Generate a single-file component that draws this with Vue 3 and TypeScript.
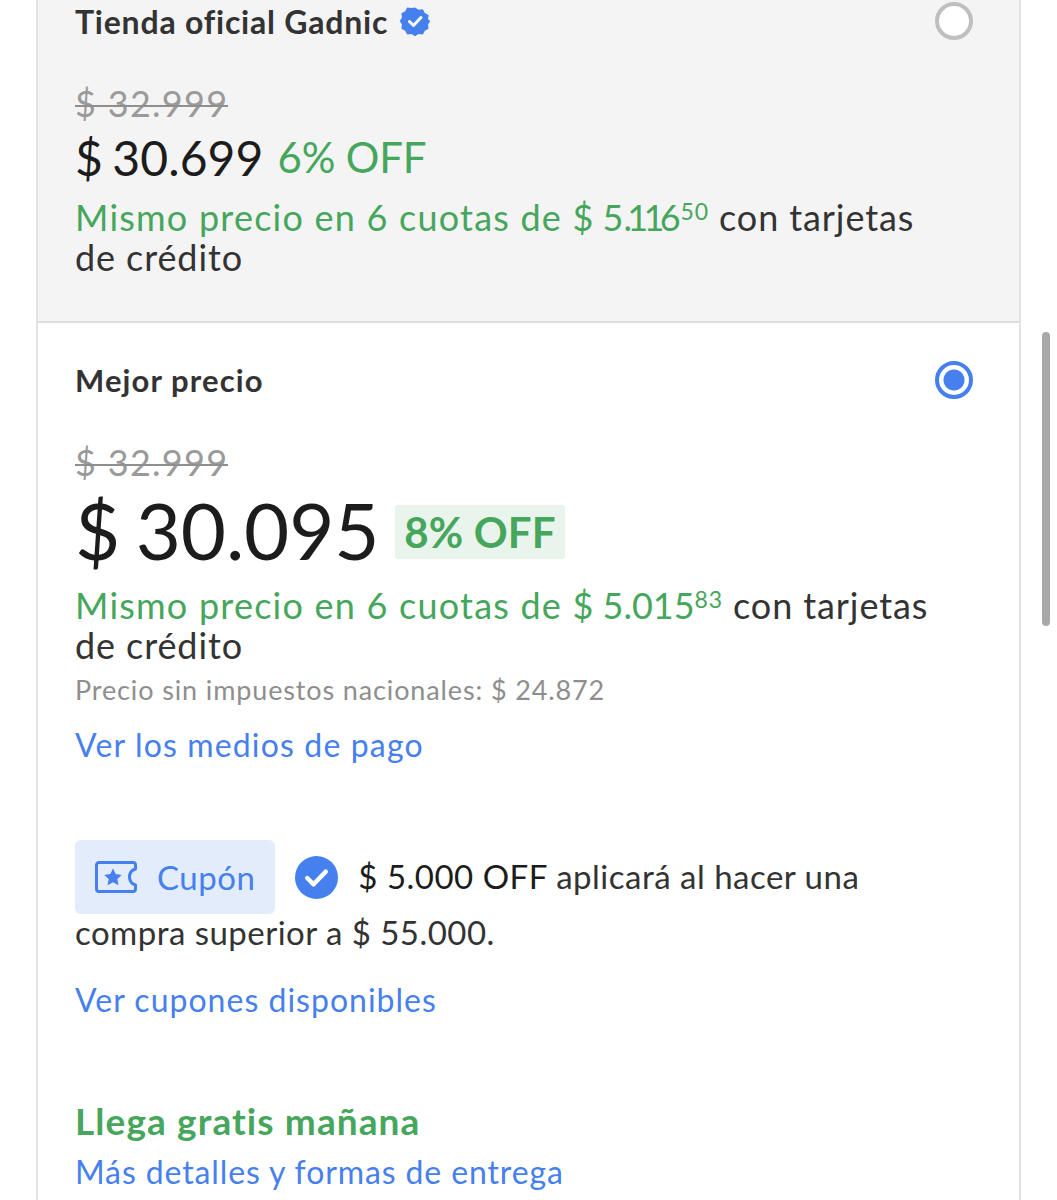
<template>
  <div class="page">
    <div class="frame">
      <section class="offer muted">
        <div class="head">
          <div class="title">
            Tienda oficial Gadnic
            <svg class="verified" viewBox="0 0 32 32" width="32" height="32">
              <path fill="#4680ee" d="M16 1l4 2.600 4.700-.6 2.200 4.200 4.200 2.200-.6 4.700L33 16l-2.500 4 .6 4.700-4.200 2.200-2.200 4.200-4.700-.6L16 33l-4-2.500-4.700.6-2.200-4.200-4.200-2.200.6-4.700L-1 16l2.500-3.900-.6-4.700 4.200-2.200 2.200-4.200 4.700.6z" transform="translate(1.600 1.600) scale(.9)"/>
              <path fill="none" stroke="#fff" stroke-width="3" stroke-linecap="round" stroke-linejoin="round" d="M10.500 16.500l4 4 7.500-8"/>
            </svg>
          </div>
          <span class="radio"></span>
        </div>
        <div class="old">$ 32.999</div>
        <div class="price-row small">
          <span class="price">$ 30.699</span>
          <span class="off">6% OFF</span>
        </div>
        <p class="installments first"><span class="green">Mismo precio en 6 cuotas de <span class="amt">$ 5<span class="ones">.11</span>6</span><sup>50</sup></span><span class="rest"> con tarjetas de crédito</span></p>
      </section>

      <section class="offer best-offer">
        <div class="head">
          <div class="title best">Mejor precio</div>
          <span class="radio on"></span>
        </div>
        <div class="old">$ 32.999</div>
        <div class="price-row big">
          <span class="price">$ 30.095</span>
          <span class="off tag">8% OFF</span>
        </div>
        <p class="installments second"><span class="green">Mismo precio en 6 cuotas de <span class="amt">$ 5.015</span><sup>83</sup></span><span class="rest"> con tarjetas de crédito</span></p>
        <div class="no-tax">Precio sin impuestos nacionales: $ 24.872</div>
        <a class="link pay">Ver los medios de pago</a>

        <div class="coupon">
          <span class="coupon-tag">
            <svg viewBox="0 0 44 34" width="44" height="34" fill="none">
              <path stroke="#4680ee" stroke-width="3" stroke-linejoin="round" d="M5 2.500h34a2.500 2.500 0 0 1 2.500 2.500v4c-3.500 1-6 4-6 8s2.500 7 6 8v4a2.500 2.500 0 0 1-2.500 2.500H5A2.500 2.500 0 0 1 2.500 29V5A2.500 2.500 0 0 1 5 2.500z"/>
              <path fill="#4680ee" d="M19 8.500l2.700 5.600 6.100.8-4.500 4.200 1.200 6.100-5.500-3-5.500 3 1.200-6.100-4.500-4.200 6.100-.8z"/>
            </svg>
            Cupón
          </span>
          <svg class="check" viewBox="0 0 44 44" width="43" height="43">
            <circle cx="22" cy="22" r="22" fill="#4680ee"/>
            <path fill="none" stroke="#fff" stroke-width="4.500" stroke-linecap="round" stroke-linejoin="round" d="M12.500 22.500l6.500 6.500 12.500-13"/>
          </svg>
          <span class="coupon-text"><span class="strong">$ 5.000 OFF</span> aplicará al hacer una</span>
        </div>
        <div class="coupon-more">compra superior a $ 55.000.</div>
        <a class="link coupons">Ver cupones disponibles</a>

        <div class="shipping">Llega gratis mañana</div>
        <a class="link details">Más detalles y formas de entrega</a>
      </section>
    </div>
    <div class="scrollbar"></div>
  </div>
</template>

<script setup lang="ts">
</script>

<style>
html, body {
  background: #fff;
  overflow: hidden;
}
</style>

<style scoped>
.page {
  position: relative;
  width: 1057px;
  height: 1200px;
  overflow: hidden;
  font-family: "Lato", "Open Sans", sans-serif;
  color: #333;
}

.frame {
  margin-left: 36px;
  width: 985px;
  height: 1200px;
  border-left: 2px solid #e3e3e3;
  border-right: 2px solid #e3e3e3;
  box-sizing: border-box;
}

.offer {
  padding: 0 46px 0 37px;
}

.muted {
  height: 323px;
  box-sizing: border-box;
  background: #f4f4f4;
  border-bottom: 2px solid #dedede;
}

.best-offer {
  padding-top: 35px;
}

.head {
  display: flex;
  justify-content: space-between;
  align-items: center;
  height: 44px;
}

.muted .head {
  height: 42px;
}

.title {
  display: flex;
  align-items: center;
  gap: 11px;
  font-size: 32px;
  font-weight: 700;
  letter-spacing: 0.78px;
}

.best {
  font-size: 31px;
  letter-spacing: 1.100px;
}

.verified {
  flex: none;
  width: 32px;
  height: 32px;
}

.radio {
  box-sizing: border-box;
  width: 38px;
  height: 38px;
  border-radius: 50%;
  background: #fff;
  border: 4px solid #bfbfbf;
}

.radio.on {
  border-color: #4680ee;
  background: radial-gradient(circle, #4680ee 0 10px, #fff 11px);
}

.old {
  position: relative;
  margin-top: 38px;
  width: fit-content;
  font-size: 36px;
  line-height: 44px;
  color: #9a9a9a;
  letter-spacing: 1.300px;
}

.muted .old {
  margin-top: 39px;
}

.old::after {
  content: "";
  position: absolute;
  left: 0;
  right: 0;
  top: 24px;
  height: 2px;
  background: #8f8f8f;
}

.price-row {
  display: flex;
  align-items: center;
  color: #1c1c1c;
}

.price-row.small {
  height: 64px;
  gap: 14px;
}

.price-row.small .price {
  font-size: 48px;
  letter-spacing: 0.100px;
  word-spacing: -3px;
}

.price-row.small .off {
  font-size: 42px;
  letter-spacing: -0.150px;
}

.price-row.big {
  height: 78px;
  gap: 16px;
  margin-top: 7px;
}

.price-row.big .price {
  font-size: 78px;
  letter-spacing: -0.200px;
  word-spacing: -4px;
}

.off {
  color: #46a65c;
}

.price-row .tag {
  display: flex;
  align-items: center;
  height: 54px;
  margin-top: 4px;
  padding: 0 9px;
  border-radius: 4px;
  background: #e9f4ec;
  font-size: 42px;
  font-weight: 700;
  letter-spacing: 0.150px;
}

.installments {
  margin: 0;
  font-size: 36px;
  line-height: 40px;
  letter-spacing: 1.220px;
}

.installments.first {
  margin-top: 8px;
  max-width: 870px;
}

.installments.second {
  margin-top: 16px;
}

.amt {
  letter-spacing: -0.010px;
}

.ones {
  letter-spacing: -4.680px;
}

.rest {
  letter-spacing: 0.900px;
}

.green {
  color: #46a65c;
}

sup {
  font-size: 23px;
  line-height: 0;
  vertical-align: 11px;
  letter-spacing: 0.850px;
}

.no-tax {
  margin-top: 8px;
  font-size: 27px;
  line-height: 34px;
  color: #8e8e8e;
  letter-spacing: 0.870px;
}

.link {
  display: block;
  font-size: 32px;
  line-height: 40px;
  color: #4680ee;
  letter-spacing: 1.150px;
}

.pay {
  margin-top: 18px;
}

.coupon {
  display: flex;
  align-items: center;
  margin-top: 75px;
  height: 74px;
}

.coupon-tag {
  display: flex;
  align-items: center;
  gap: 19px;
  height: 74px;
  box-sizing: border-box;
  padding: 0 20px 0 19px;
  border-radius: 6px;
  background: #e3ecfb;
  color: #4680ee;
  font-size: 33px;
  letter-spacing: 0.500px;
}

.check {
  flex: none;
  margin-left: 20px;
}

.coupon-text {
  margin-left: 20px;
  padding-bottom: 2px;
  font-size: 33px;
  letter-spacing: 0.500px;
}

.strong {
  color: #1c1c1c;
}

.coupon-more {
  margin-top: -2px;
  font-size: 33px;
  line-height: 40px;
  letter-spacing: 0.470px;
}

.link.coupons {
  margin-top: 28px;
  letter-spacing: 1.010px;
}

.shipping {
  margin-top: 80px;
  font-size: 37px;
  line-height: 42px;
  font-weight: 700;
  color: #46a65c;
  letter-spacing: 1.100px;
}

.link.details {
  margin-top: 10px;
  letter-spacing: 0.880px;
}

.scrollbar {
  position: absolute;
  left: 1042px;
  top: 332px;
  width: 8px;
  height: 294px;
  border-radius: 4px;
  background: #a8a8a8;
}
</style>
